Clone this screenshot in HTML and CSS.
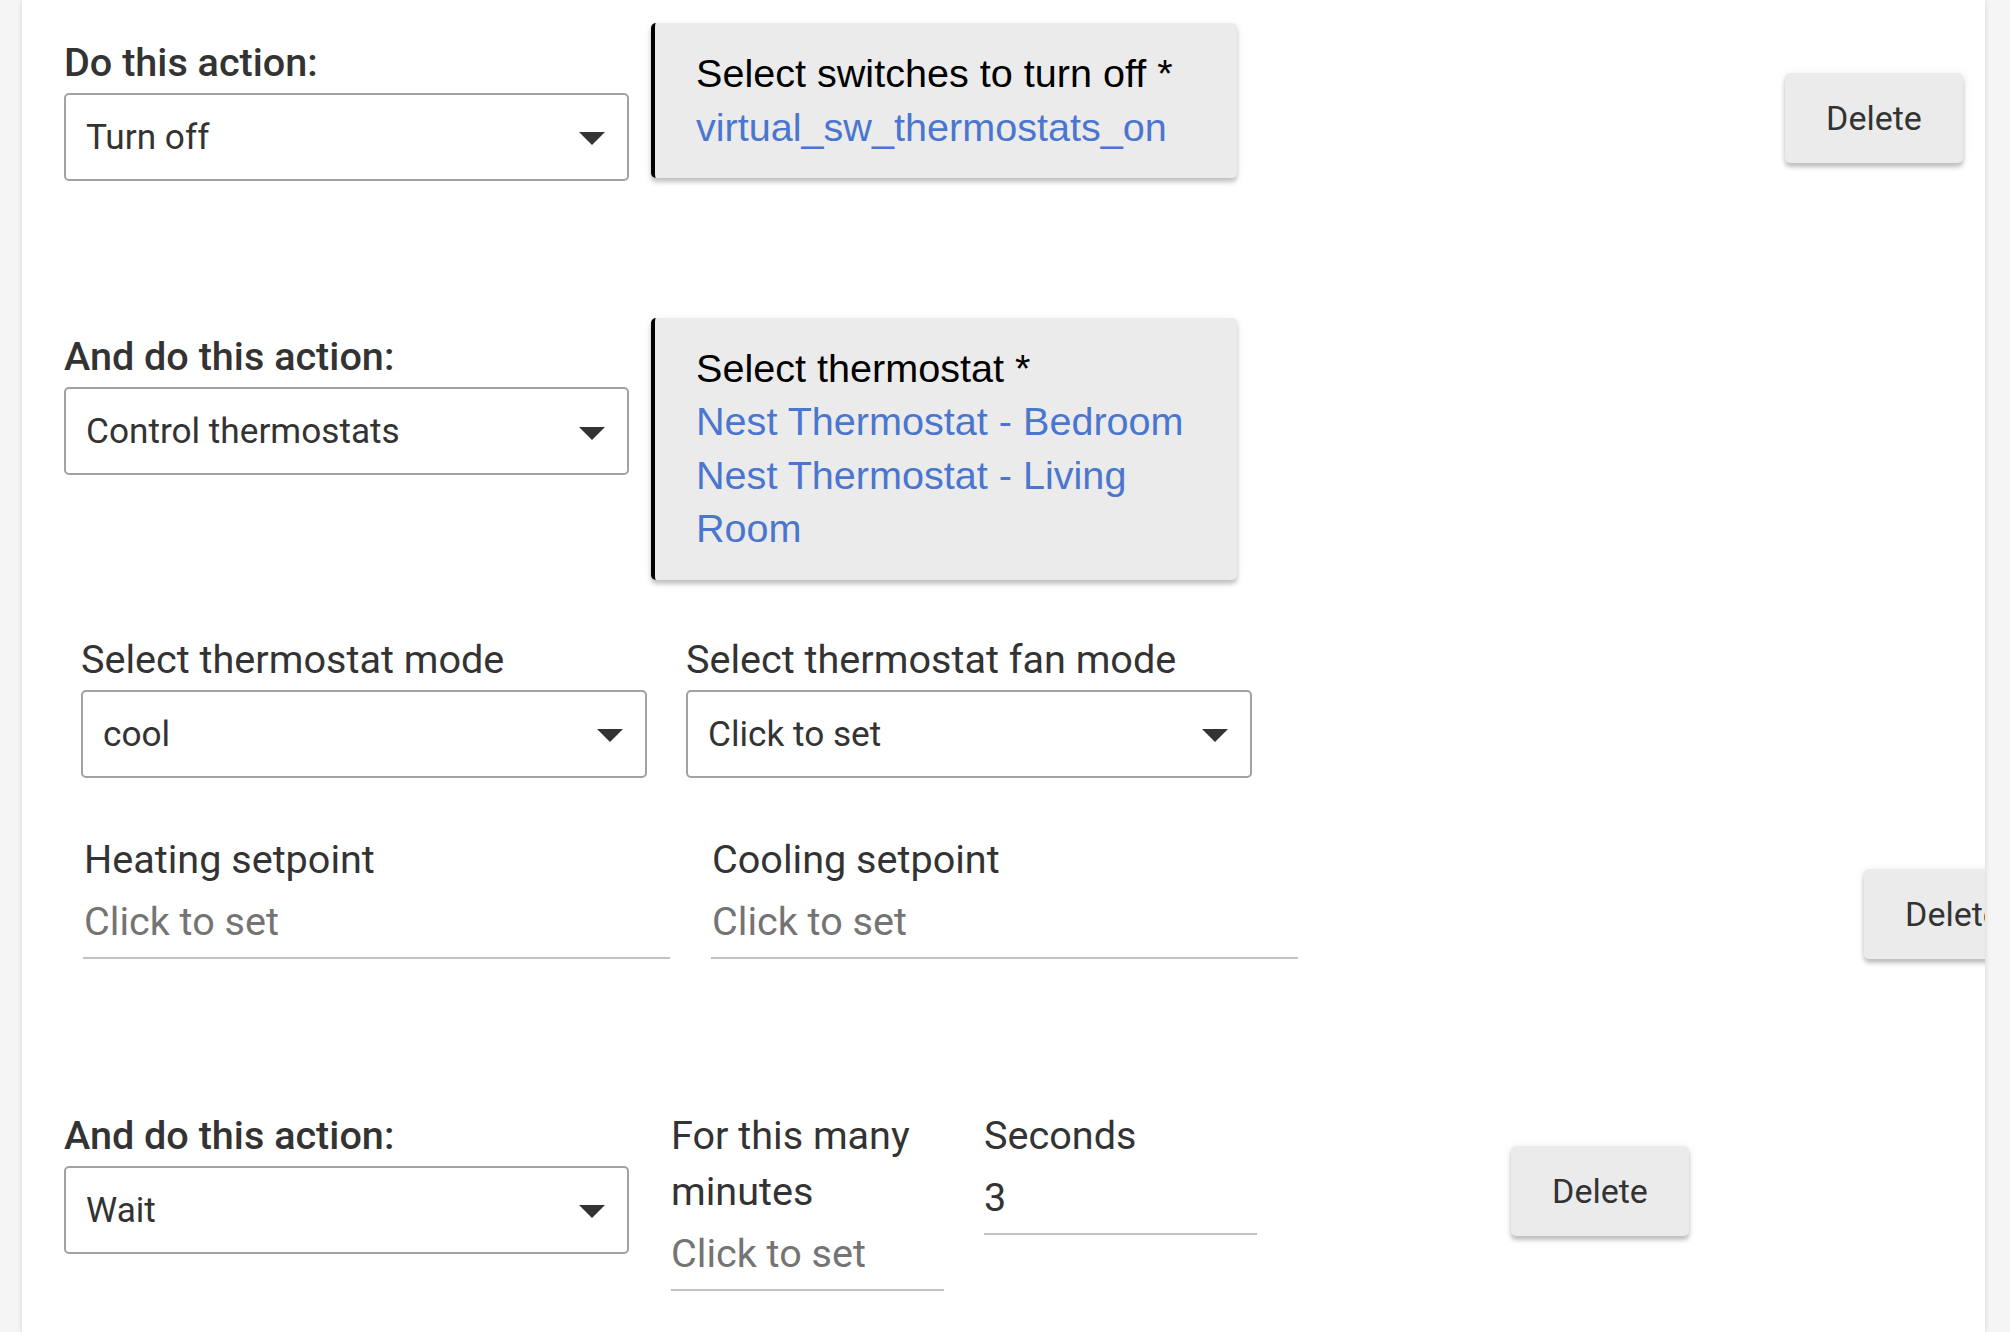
FILE: index.html
```html
<!DOCTYPE html>
<html lang="en">
<head>
<meta charset="utf-8">
<title>Actions</title>
<link rel="stylesheet" href="styles.css">
</head>
<body>
<div class="page">

  <section class="row row-first">
    <div class="pick">
      <div class="pick-label">Do this action:</div>
      <div class="select"><span class="select-value">Turn off</span><span class="caret"></span></div>
    </div>
    <div class="devcard">
      <div class="devcard-title">Select switches to turn off *</div>
      <div class="devcard-link">virtual_sw_thermostats_on</div>
    </div>
    <button class="delete delete-r1">Delete</button>
  </section>

  <section class="action">
    <div class="row">
      <div class="pick">
        <div class="pick-label">And do this action:</div>
        <div class="select"><span class="select-value">Control thermostats</span><span class="caret"></span></div>
      </div>
      <div class="devcard">
        <div class="devcard-title">Select thermostat *</div>
        <div class="devcard-link">Nest Thermostat - Bedroom</div>
        <div class="devcard-link">Nest Thermostat - Living Room</div>
      </div>
    </div>
    <div class="subrow subrow-modes">
      <div class="sfield">
        <div class="field-label">Select thermostat mode</div>
        <div class="select"><span class="select-value">cool</span><span class="caret"></span></div>
      </div>
      <div class="sfield">
        <div class="field-label">Select thermostat fan mode</div>
        <div class="select"><span class="select-value">Click to set</span><span class="caret"></span></div>
      </div>
    </div>
    <div class="subrow subrow-points">
      <div class="field field-wide">
        <div class="field-label">Heating setpoint</div>
        <div class="field-input placeholder">Click to set</div>
      </div>
      <div class="field field-wide field-cool">
        <div class="field-label">Cooling setpoint</div>
        <div class="field-input placeholder">Click to set</div>
      </div>
      <button class="delete delete-r2">Delete</button>
    </div>
  </section>

  <section class="row action action-last">
    <div class="pick">
      <div class="pick-label">And do this action:</div>
      <div class="select"><span class="select-value">Wait</span><span class="caret"></span></div>
    </div>
    <div class="field field-narrow field-minutes">
      <div class="field-label">For this many minutes</div>
      <div class="field-input placeholder">Click to set</div>
    </div>
    <div class="field field-narrow field-seconds">
      <div class="field-label">Seconds</div>
      <div class="field-input">3</div>
    </div>
    <button class="delete delete-r3">Delete</button>
  </section>

</div>
</body>
</html>
```

FILE: styles.css
```css
* {
  box-sizing: border-box;
}

html, body {
  margin: 0;
  padding: 0;
  background: #f5f5f5;
  height: 100%;
  overflow: hidden;
}

body {
  font-family: Roboto, "Noto Sans", sans-serif;
  color: #333333;
}

.page {
  margin-left: 22px;
  width: 1963px;
  min-height: 1332px;
  background: #ffffff;
  box-shadow: 0 0 5px rgba(0, 0, 0, 0.14);
  overflow: hidden;
  padding-top: 23px;
}

.row {
  display: flex;
  align-items: flex-start;
}

.action {
  margin-top: 137px;
}

.action-last {
  margin-top: 137px;
}

/* left column: label + dropdown */
.pick {
  width: 565px;
  margin-left: 42px;
  padding-top: 11.5px;
  flex: none;
}

.pick-label {
  font-size: 39.6px;
  font-weight: 500;
  line-height: 56px;
  color: #333333;
  white-space: nowrap;
}

.select {
  margin-top: 2px;
  height: 88px;
  border: 2px solid #a2a2a2;
  border-radius: 5px;
  display: flex;
  align-items: center;
  justify-content: space-between;
  padding: 0 22px 0 20px;
  background: #ffffff;
}

.select-value {
  font-size: 35.2px;
  color: #333333;
  white-space: nowrap;
}

.caret {
  width: 0;
  height: 0;
  border-left: 13px solid transparent;
  border-right: 13px solid transparent;
  border-top: 13px solid #333333;
  margin-top: 4px;
}

/* device card */
.devcard {
  flex: none;
  width: 586px;
  margin-left: 22px;
  background: #ebebeb;
  border-left: 4px solid #000000;
  border-radius: 5px;
  padding: 24px 40px 24px 41px;
  font-family: "Liberation Sans", Arial, sans-serif;
  font-size: 39.6px;
  line-height: 53.5px;
  box-shadow: 0 4px 4px rgba(0, 0, 0, 0.2), 0 2px 10px rgba(0, 0, 0, 0.08);
}

.devcard-title {
  color: #000000;
}

.devcard-link {
  color: #4a76cf;
}

/* delete buttons */
.delete {
  flex: none;
  width: 178px;
  height: 90px;
  border: none;
  border-radius: 5px;
  background: #ebebeb;
  color: #333333;
  font-family: Roboto, "Noto Sans", sans-serif;
  font-size: 34px;
  box-shadow: 0 4px 4px rgba(0, 0, 0, 0.22), 0 1px 10px rgba(0, 0, 0, 0.08);
  padding: 0;
}

.delete-r1 {
  margin-left: 548px;
  margin-top: 50px;
}

.delete-r2 {
  margin-left: 566px;
  margin-top: 37.5px;
}

.delete-r3 {
  margin-left: 254px;
  margin-top: 50px;
}

/* thermostat sub fields */
.subrow {
  display: flex;
  align-items: flex-start;
}

.subrow-modes {
  margin-top: 52px;
  margin-left: 59px;
  gap: 39px;
}

.subrow-points {
  margin-top: 54px;
  margin-left: 61px;
}

.sfield {
  width: 566px;
  flex: none;
}

.field-label {
  font-size: 39.6px;
  line-height: 56px;
  color: #333333;
}

.field {
  flex: none;
  border-bottom: 2px solid #c2c2c2;
}

.field-input {
  font-size: 39.6px;
  line-height: 56px;
  padding-top: 6px;
  padding-bottom: 7px;
  color: #333333;
  white-space: nowrap;
}

.field-input.placeholder {
  color: #747474;
}

.field-wide {
  width: 587px;
}

.field-wide .field-label,
.field-wide .field-input {
  padding-left: 1px;
}

.field-cool {
  margin-left: 41px;
}

.field-narrow {
  width: 273px;
}

.field-minutes {
  margin-left: 42px;
  margin-top: 11.5px;
}

.field-seconds {
  margin-left: 40px;
  margin-top: 11.5px;
}
```
